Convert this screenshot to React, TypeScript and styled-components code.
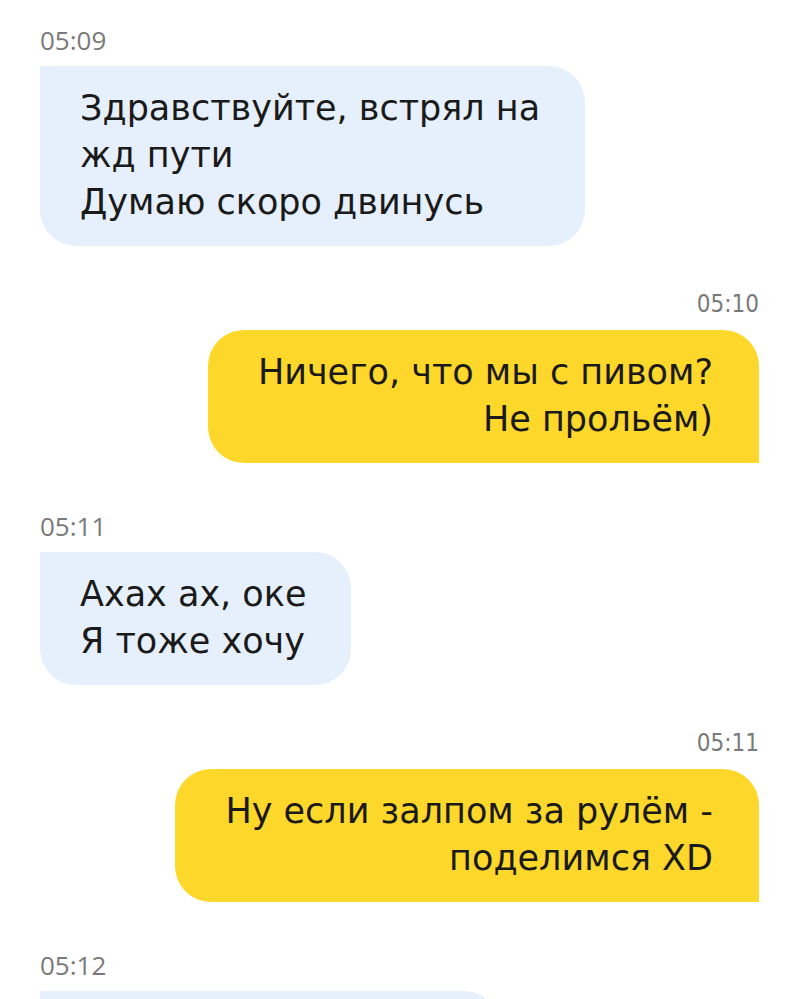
import React from "react";
import styled, { createGlobalStyle } from "styled-components";

const Global = createGlobalStyle`
  html, body {
    margin: 0;
    padding: 0;
    background: #ffffff;
    height: 999px;
    overflow: hidden;
  }
`;

const Chat = styled.div`
  display: flex;
  flex-direction: column;
  padding: 28px 40px 0;
  height: 999px;
  box-sizing: border-box;
  overflow: hidden;
  font-family: "DejaVu Sans", "Noto Sans", sans-serif;
`;

const Group = styled.div<{ $out?: boolean }>`
  display: flex;
  flex-direction: column;
  align-items: ${(p) => (p.$out ? "flex-end" : "flex-start")};
  margin-bottom: ${(p) => (p.$out ? "51px" : "46px")};
`;

const Time = styled.div<{ $out?: boolean }>`
  font-family: ${(p) => (p.$out ? '"DejaVu Sans Condensed"' : '"Open Sans"')}, "Noto Sans", sans-serif;
  font-size: ${(p) => (p.$out ? "24px" : "26px")};
  line-height: 24px;
  color: #7a7a7a;
  margin-bottom: 14px;
`;

const Bubble = styled.div<{ $out?: boolean }>`
  box-sizing: border-box;
  width: fit-content;
  padding: ${(p) => (p.$out ? "19px 46px 20px 50px" : "19px 45px 20px 40px")};
  background: ${(p) => (p.$out ? "#fdd82a" : "#e6f0fc")};
  border-radius: ${(p) => (p.$out ? "36px 36px 0 36px" : "0 36px 36px 36px")};
  color: #1a1a1a;
  font-family: "DejaVu Sans", "Noto Sans", sans-serif;
  font-size: 35px;
  line-height: 47px;
  text-align: ${(p) => (p.$out ? "right" : "left")};
  white-space: nowrap;
`;

const Stub = styled(Bubble)<{ $w: number }>`
  width: ${(p) => p.$w}px;
  height: 140px;
`;

type Msg = { time: string; out?: boolean; lines: string[] };

const messages: Msg[] = [
  { time: "05:09", lines: ["Здравствуйте, встрял на", "жд пути", "Думаю скоро двинусь"] },
  { time: "05:10", out: true, lines: ["Ничего, что мы с пивом?", "Не прольём)"] },
  { time: "05:11", lines: ["Ахах ах, оке", "Я тоже хочу"] },
  { time: "05:11", out: true, lines: ["Ну если залпом за рулём -", "поделимся XD"] },
];

export default function App() {
  return (
    <>
      <Global />
      <Chat>
        {messages.map((m, i) => (
          <Group key={i} $out={m.out}>
            <Time $out={m.out}>{m.time}</Time>
            <Bubble $out={m.out}>
              {m.lines.map((l, j) => (
                <div key={j}>{l}</div>
              ))}
            </Bubble>
          </Group>
        ))}
        <Group>
          <Time>05:12</Time>
          <Stub $w={460} />
        </Group>
      </Chat>
    </>
  );
}
